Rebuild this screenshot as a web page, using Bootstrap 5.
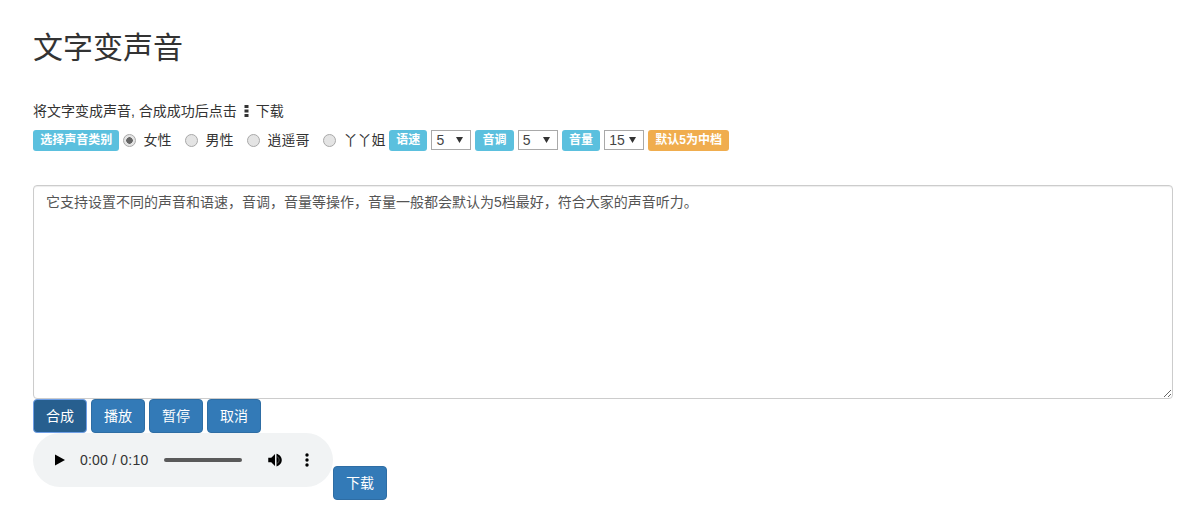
<!DOCTYPE html>
<html lang="zh">
<head>
<meta charset="utf-8">
<title>文字变声音</title>
<link href="https://cdn.jsdelivr.net/npm/bootstrap@5.3.0/dist/css/bootstrap.min.css" rel="stylesheet">
<style>
body{font-family:"Liberation Sans","Noto Sans CJK SC",sans-serif;font-size:14px;color:#333;background:#fff;padding:0 20px 0 33px;}
.pg-title{font-size:30px;line-height:33px;font-weight:400;margin:31px 0 0;color:#333;}
.pg-hint{font-size:14px;line-height:20px;margin:37px 0 0;}
.pg-hint svg{margin:0 3px 0 7px;vertical-align:-1px;}
.ctrl-row{height:20px;margin:9px 0 0;white-space:nowrap;}
.tag{display:inline-block;font-size:12px;font-weight:700;line-height:13px;padding:4px 7.2px;border-radius:3px;color:#fff;background:#5bc0de;margin-right:4px;}
.tag-warn{background:#f0ad4e;margin-right:0;}
.rd{appearance:none;width:13px;height:13px;margin:0 7px 0 0;border-radius:50%;border:1px solid #a9a9a9;background:#e4e4e4;flex:none;}
.rd:checked{background:radial-gradient(circle,#666 0 3px,#e4e4e4 3.5px);}
.rd-label{margin-right:14px;line-height:20px;}
.rd-label.last{margin-right:3.6px;}
.sel{appearance:none;height:20px;font-size:14px;line-height:18px;padding:0 0 0 4px;border:1px solid #a9a9a9;border-radius:0;background:#fff url("data:image/svg+xml,%3Csvg xmlns='http://www.w3.org/2000/svg' width='7' height='6'%3E%3Cpath d='M0 0h7L3.500 6z' fill='%23333'/%3E%3C/svg%3E") no-repeat right 7px center;color:#444;margin-right:4px;width:40px;font-family:"Liberation Sans",sans-serif;}
.sel:focus{outline:0;}
.txt{display:block;width:100%;height:214px;margin-top:35px;padding:6px 12px;font-size:14px;line-height:20px;color:#555;border:1px solid #ccc;border-radius:4px;box-shadow:inset 0 1px 1px rgba(0,0,0,.075);}
.txt:focus{outline:0;}
.act{font-size:14px;font-weight:400;line-height:20px;padding:6px 12px;background:#337ab7;border:1px solid #2e6da4;border-radius:4px;color:#fff;width:54px;white-space:nowrap;}
.act:hover{background:#286090;color:#fff;}
.act-on{background:#275f8f;border-color:#6f9fe6;}
.player{width:300px;height:54px;border-radius:27px;background:#f1f3f4;padding:0 16px 0 21px;color:#333;}
.player-time{font-size:14px;margin-left:14px;color:#333;width:84px;white-space:nowrap;letter-spacing:.2px;}
.player-bar{width:78px;height:4px;border-radius:2px;background:#5a5a5a;margin-right:24px;}
.player svg{flex:none;}
.player-more{margin-left:21px;}
.dl-btn{margin-top:33px;}
</style>
</head>
<body>
<h1 class="pg-title">文字变声音</h1>
<p class="pg-hint">将文字变成声音, 合成成功后点击<svg width="5" height="12" viewBox="0 0 5 12"><rect x=".5" y="0" width="4" height="3" fill="#333"/><rect x=".5" y="4.500" width="4" height="3" fill="#333"/><rect x=".5" y="9" width="4" height="3" fill="#333"/></svg> 下载</p>
<div class="ctrl-row d-flex align-items-center">
  <span class="tag">选择声音类别</span>
  <input class="rd" type="radio" name="voice" checked aria-label="女性"><span class="rd-label">女性</span>
  <input class="rd" type="radio" name="voice" aria-label="男性"><span class="rd-label">男性</span>
  <input class="rd" type="radio" name="voice" aria-label="逍遥哥"><span class="rd-label">逍遥哥</span>
  <input class="rd" type="radio" name="voice" aria-label="丫丫姐"><span class="rd-label last">丫丫姐</span>
  <span class="tag">语速</span>
  <select class="sel"><option>5</option></select>
  <span class="tag">音调</span>
  <select class="sel"><option>5</option></select>
  <span class="tag">音量</span>
  <select class="sel"><option>15</option></select>
  <span class="tag tag-warn">默认5为中档</span>
</div>
<textarea class="txt">它支持设置不同的声音和语速，音调，音量等操作，音量一般都会默认为5档最好，符合大家的声音听力。</textarea>
<div class="d-flex gap-1">
  <button type="button" class="btn act act-on">合成</button>
  <button type="button" class="btn act">播放</button>
  <button type="button" class="btn act">暂停</button>
  <button type="button" class="btn act">取消</button>
</div>
<div class="d-flex align-items-start">
  <div class="player d-flex align-items-center">
    <svg width="12" height="14" viewBox="0 0 12 14"><path d="M1 1.500v11l10-5.500z" fill="#000"/></svg>
    <span class="player-time">0:00 / 0:10</span>
    <span class="player-bar"></span>
    <svg width="18" height="18" viewBox="0 0 24 24"><path d="M3 9v6h4l5 5V4L7 9H3z" fill="#000"/><path d="M14 3.500c4 1 7 4.400 7 8.500s-3 7.500-7 8.500z" fill="#000"/><path d="M14 7c2 .8 3.500 2.800 3.500 5s-1.500 4.200-3.500 5" fill="none" stroke="#8a8b8c" stroke-width=".8"/></svg>
    <svg class="player-more" width="4" height="14" viewBox="0 0 4 14"><circle cx="2" cy="2" r="1.700" fill="#000"/><circle cx="2" cy="7" r="1.700" fill="#000"/><circle cx="2" cy="12" r="1.700" fill="#000"/></svg>
  </div>
  <button type="button" class="btn act dl-btn">下载</button>
</div>
</body>
</html>
